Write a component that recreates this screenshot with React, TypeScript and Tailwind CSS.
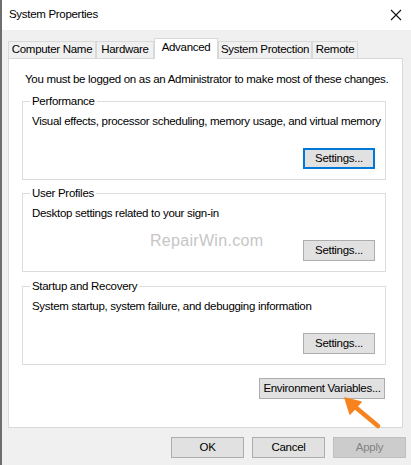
import React from 'react';

const font = { fontFamily: '"Liberation Sans", Arial, sans-serif' };
const txt = 'text-[11.5px] tracking-[-0.3px] whitespace-nowrap';

const Btn = ({ label, w = 'w-[72px]', focused = false, disabled = false }: { label: string; w?: string; focused?: boolean; disabled?: boolean }) => (
  <div
    className={
      'h-[21px] flex items-center justify-center ' +
      txt +
      ' ' +
      w +
      ' ' +
      (disabled
        ? 'bg-[#cccccc] border border-[#bfbfbf] text-[#838383]'
        : focused
        ? 'bg-[#e1e1e1] border-2 border-[#0078d7] text-black'
        : 'bg-[#e1e1e1] border border-[#adadad] text-black')
    }
  >
    {label}
  </div>
);

const Group = ({ title, desc, children }: { title: string; desc: string; children?: React.ReactNode }) => (
  <fieldset className="relative ml-[13px] w-[364px] border border-[#dcdcdc] m-0 px-0 pt-0 pb-[10px]">
    <legend className={'ml-[7px] px-[2px] leading-[15px] text-black ' + txt}>{title}</legend>
    <div className={'ml-[9px] mt-[5px] leading-[15px] text-black ' + txt}>{desc}</div>
    <div className="flex justify-end mr-[10px] mt-[19px]">
      <Btn label="Settings..." focused={title === 'Performance'} />
    </div>
    {children}
  </fieldset>
);

const tabs = [
  { name: 'Computer Name', w: 'w-[88px]' },
  { name: 'Hardware', w: 'w-[58px]' },
  { name: 'Advanced', w: 'w-[64px]', active: true },
  { name: 'System Protection', w: 'w-[94px]' },
  { name: 'Remote', w: 'w-[46px]' },
];

export default function App() {
  return (
    <div style={font} className="relative w-[411px] h-[465px] bg-[#f0f0f0] border-l-2 border-[#6e6e6e] flex flex-col overflow-hidden">
      <div className="h-[30px] bg-white flex items-center justify-between pl-[7px] pr-[9px] shrink-0">
        <span className="text-[11.5px] tracking-[-0.3px] text-black">System Properties</span>
        <svg width="12" height="12" viewBox="0 0 12 12">
          <path d="M1 1 L11 11 M11 1 L1 11" stroke="#111" strokeWidth="1.1" fill="none" />
        </svg>
      </div>

      <div className="flex items-end ml-[6px] mt-[7px] h-[21px] shrink-0">
        {tabs.map((t) => (
          <div
            key={t.name}
            className={
              'flex items-center justify-center text-black border-t border-l border-r border-[#d9d9d9] ' +
              txt +
              ' ' +
              t.w +
              ' ' +
              (t.active ? 'h-[21px] bg-white relative z-10 -mb-px pb-[2px]' : 'h-[17px] bg-[#f0f0f0]')
            }
          >
            {t.name}
          </div>
        ))}
      </div>

      <div className="ml-[6px] w-[395px] h-[370px] bg-white border border-[#d9d9d9] flex flex-col shrink-0">
        <div className={'ml-[16px] mt-[13px] leading-[15px] text-black ' + txt}>
          You must be logged on as an Administrator to make most of these changes.
        </div>
        <div className="mt-[7px]">
          <Group title="Performance" desc="Visual effects, processor scheduling, memory usage, and virtual memory" />
        </div>
        <div className="mt-[6px]">
          <Group title="User Profiles" desc="Desktop settings related to your sign-in">
            <span className="absolute left-[127px] top-[28px] text-[16px] tracking-[0.3px] text-[#c6c6c6]">RepairWin.com</span>
          </Group>
        </div>
        <div className="mt-[7px]">
          <Group title="Startup and Recovery" desc="System startup, system failure, and debugging information" />
        </div>
        <div className="flex justify-end mr-[17px] mt-[13px]">
          <Btn label="Environment Variables..." w="w-[126px]" />
        </div>
      </div>

      <div className="flex justify-end gap-[8px] mr-[5px] mt-[9px]">
        <Btn label="OK" w="w-[73px]" />
        <Btn label="Cancel" w="w-[73px]" />
        <Btn label="Apply" w="w-[73px]" disabled />
      </div>

      <svg className="absolute left-[338px] top-[393px]" width="44" height="38" viewBox="0 0 44 38">
        <path d="M38 33 L14 13" stroke="#f7831f" strokeWidth="4.5" strokeLinecap="round" fill="none" />
        <path d="M5 5 L21 9 L10 21 Z" fill="#f7831f" stroke="#f7831f" strokeWidth="1.5" strokeLinejoin="round" />
      </svg>
    </div>
  );
}
